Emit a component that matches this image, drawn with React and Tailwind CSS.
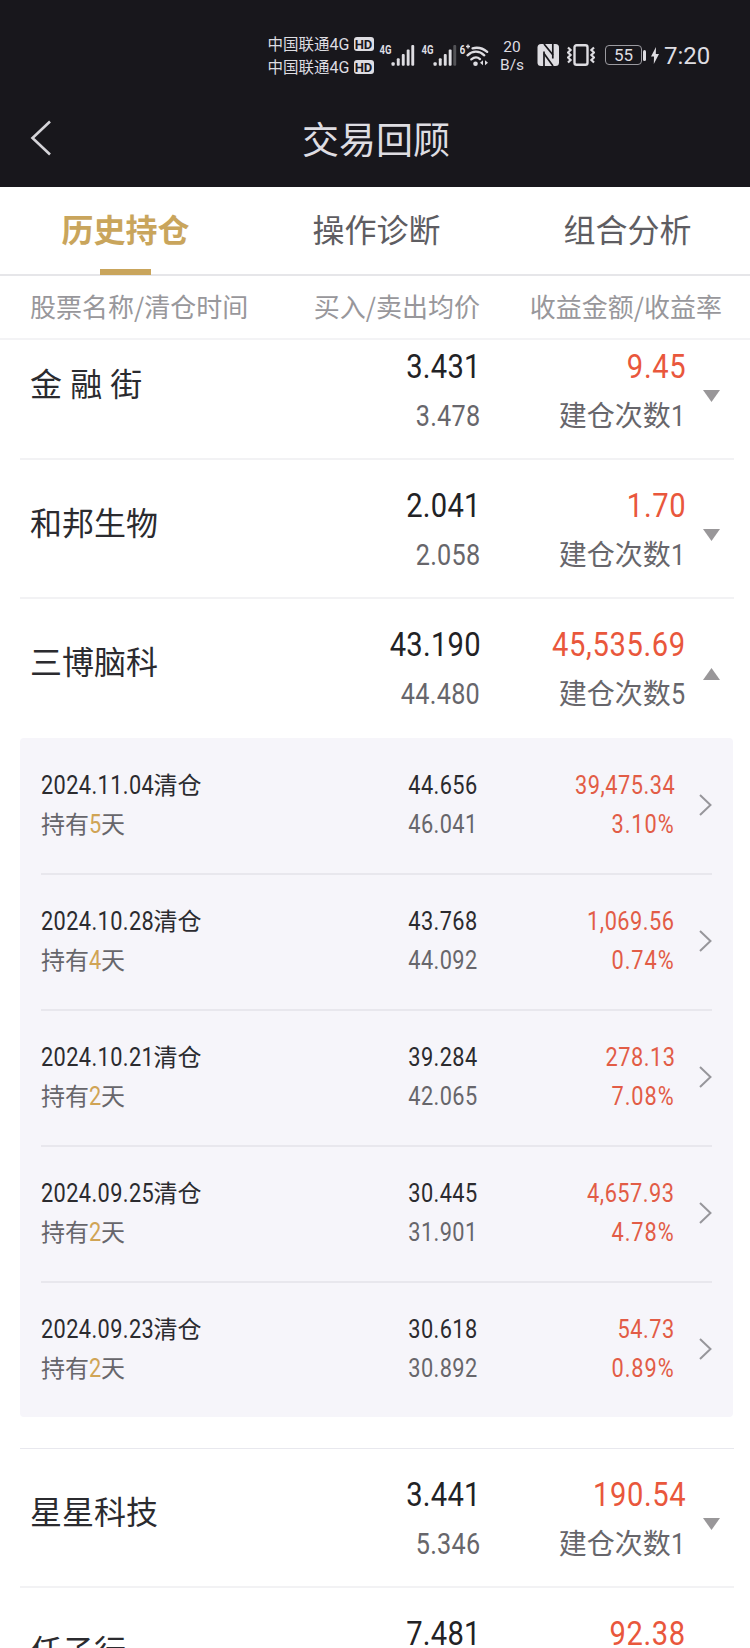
import React from "react";

const SANS = "font-['Noto_Sans_CJK_SC',sans-serif]";

const positions = [
  { name: "金 融 街", buy: "3.431", sell: "3.478", profit: "9.45", times: "1" },
  { name: "和邦生物", buy: "2.041", sell: "2.058", profit: "1.70", times: "1" },
  {
    name: "三博脑科",
    buy: "43.190",
    sell: "44.480",
    profit: "45,535.69",
    times: "5",
    records: [
      { date: "2024.11.04", days: "5", buy: "44.656", sell: "46.041", profit: "39,475.34", rate: "3.10%" },
      { date: "2024.10.28", days: "4", buy: "43.768", sell: "44.092", profit: "1,069.56", rate: "0.74%" },
      { date: "2024.10.21", days: "2", buy: "39.284", sell: "42.065", profit: "278.13", rate: "7.08%" },
      { date: "2024.09.25", days: "2", buy: "30.445", sell: "31.901", profit: "4,657.93", rate: "4.78%" },
      { date: "2024.09.23", days: "2", buy: "30.618", sell: "30.892", profit: "54.73", rate: "0.89%" },
    ],
  },
  { name: "星星科技", buy: "3.441", sell: "5.346", profit: "190.54", times: "1" },
  { name: "任子行", buy: "7.481", profit: "92.38" },
];

// Narrow numerals, anchored to the right edge of their column.
function Num({ children, className = "" }) {
  return (
    <span className={`inline-block origin-right scale-x-[0.87] whitespace-nowrap font-[Roboto,sans-serif] font-[440] ${className}`}>
      {children}
    </span>
  );
}

function Carrier() {
  return (
    <div className="flex h-[23px] items-center gap-[3px]">
      <span className="w-[83px] whitespace-nowrap text-[15.5px] leading-[23px]">
        中国联通<span className="font-[Roboto,sans-serif] text-[16px]">4G</span>
      </span>
      <span className="mt-px flex h-[14px] w-5 items-center justify-center rounded-[3px] bg-[#dedde2] font-[Roboto,sans-serif] text-[13px] font-bold leading-none text-[#18171c]">
        HD
      </span>
    </div>
  );
}

function Signal({ weak }) {
  return (
    <svg className="h-[30px] w-[42px] shrink-0" viewBox="0 0 42 30" fill="#dedde2">
      <text x="1.5" y="14" fontFamily="Roboto, sans-serif" fontSize="12.5" fontWeight="700" textLength="12" lengthAdjust="spacingAndGlyphs">
        4G
      </text>
      <rect x="13.5" y="22.3" width="3.2" height="3.5" rx="1" />
      <rect x="18.8" y="18.3" width="2.9" height="7.5" rx="1" />
      <rect x="23.8" y="14" width="2.9" height="11.8" rx="1" />
      <rect x="28.7" y="9.5" width="2.9" height="16.3" rx="1" />
      <rect x="33.3" y="5" width="2.9" height="20.8" rx="1" opacity={weak ? 0.3 : 1} />
    </svg>
  );
}

function Wifi() {
  return (
    <svg className="h-[30px] w-[31px] shrink-0" viewBox="0 0 31 30" fill="none" stroke="#dedde2" strokeWidth="2.3" strokeLinecap="round">
      <text x="-0.5" y="14" fontFamily="Roboto, sans-serif" fontSize="12.5" fontWeight="700" fill="#dedde2" stroke="none" textLength="5.8" lengthAdjust="spacingAndGlyphs">
        6
      </text>
      <path d="M6 6.5h4M8 4.5v4" strokeWidth="1.4" strokeLinecap="butt" />
      <path d="M12.5 8.3c5-1.3 10.5 0 14.7 3.6" />
      <path d="M7.5 15.3c5-4.8 11.8-4.8 16.8 0" />
      <path d="M11.3 19.4c3-2.5 6.2-2.5 8.7-0.3" />
      <circle cx="15.5" cy="23.7" r="2.3" fill="#dedde2" stroke="none" />
      <path d="M23 20.3v5l-3-2.5zM25 20.3v5l3-2.5z" fill="#dedde2" stroke="none" />
    </svg>
  );
}

function Nfc() {
  return (
    <svg className="h-[22px] w-[23px] shrink-0" viewBox="0 0 23 22">
      <rect x="0.5" y="0" width="21.5" height="22" rx="3.5" fill="#dedde2" />
      <path d="M7 22V7.5M7 0l9 11" fill="none" stroke="#18171c" strokeWidth="1.7" />
      <path d="M15.8 0v14.5M7 9.5l9 12.5" fill="none" stroke="#18171c" strokeWidth="1.7" />
    </svg>
  );
}

function Vibrate() {
  return (
    <svg className="h-[22px] w-[28px] shrink-0" viewBox="0 0 28 22" fill="none" stroke="#dedde2">
      <rect x="7.5" y="1.3" width="13" height="19.4" rx="2" strokeWidth="2.4" />
      <path d="M1 3.5l2.6 2.5L1 8.5l2.6 2.5L1 13.5 3.6 16 1 18.5" strokeWidth="2.2" />
      <path d="M27 3.5l-2.6 2.5 2.6 2.5-2.6 2.5 2.6 2.5-2.6 2.5 2.6 2.5" strokeWidth="2.2" />
    </svg>
  );
}

function StatusBar() {
  return (
    <div className="flex h-[108px] items-start pl-[267.5px] pt-[32px] text-[#dedde2]">
      <div className="flex w-[110.5px] flex-col">
        <Carrier />
        <Carrier />
      </div>
      <div className="flex pt-[8px]">
        <Signal />
        <Signal weak />
        <div className="-ml-[2px]">
          <Wifi />
        </div>
      </div>
      <div className="ml-[8px] mt-[6px] flex w-[26px] flex-col items-center font-[Roboto,sans-serif] text-[15.5px] leading-[18px]">
        <span>20</span>
        <span>B/s</span>
      </div>
      <div className="ml-[12px] mt-[12px] flex items-center">
        <Nfc />
        <div className="ml-[7px]">
          <Vibrate />
        </div>
        <div className="ml-[10px] flex items-center">
          <span className="flex h-5 w-[37px] items-center justify-center rounded-[4px] border-[1.5px] border-[#9b9aa0] font-[Roboto,sans-serif] text-[17px] leading-none">
            55
          </span>
          <span className="ml-px h-[11px] w-[3px] rounded-sm bg-[#dedde2]" />
        </div>
        <svg className="ml-[5px] h-[17px] w-[8px]" viewBox="0 0 8 17" fill="#dedde2">
          <path d="M5 0L0 9.5h3L2.8 17 8 7H4.8z" />
        </svg>
      </div>
      <span className="ml-[5px] mt-[12px] whitespace-nowrap font-[Roboto,sans-serif] text-[24px] leading-[24px]">7:20</span>
    </div>
  );
}

function Triangle({ up }) {
  return (
    <svg className="h-3 w-[17px]" viewBox="0 0 17 12" fill="#999799">
      <path d={up ? "M0 12L8.5 0 17 12z" : "M0 0h17L8.5 12z"} />
    </svg>
  );
}

function RecordRow({ record, last }) {
  return (
    <div className={`mx-[21px] flex h-[136px] pt-[27px] ${last ? "" : "border-b-2 border-[#e8e7ed]"}`}>
      <div className="flex w-[260px] flex-col text-[24px]">
        <span className="flex h-[39px] items-center text-[#2b2b2f]">
          <Num className="-mr-[17.5px] origin-left! text-[25px] leading-[39px] tracking-[0.018em]">{record.date}</Num>
          <span className="-mt-[3px]">清仓</span>
        </span>
        <span className="flex h-[39px] items-center text-[#67666b]">
          <span className="-mt-[3px]">持有</span>
          <Num className="-mr-[2px] origin-left! text-[25px] leading-[39px] text-[#d0a455]">{record.days}</Num>
          <span className="-mt-[3px]">天</span>
        </span>
      </div>
      <div className="flex w-[177.5px] flex-col items-end text-[25px] leading-[39px] tracking-[0.018em]">
        <Num className="text-[#2b2b2f]">{record.buy}</Num>
        <Num className="text-[#67666b]">{record.sell}</Num>
      </div>
      <div className="flex w-[198px] flex-col items-end text-[25px] leading-[39px] text-[#e25c46]">
        <Num className="tracking-[0.024em]">{record.profit}</Num>
        <Num className="tracking-[0.045em]">{record.rate}</Num>
      </div>
      <svg className="ml-[24px] mt-[28px] h-[22px] w-[13px]" viewBox="0 0 13 22" fill="none" stroke="#97969b" strokeWidth="2">
        <path d="M1 1l10.5 10L1 21" />
      </svg>
    </div>
  );
}

function PositionRow({ item }) {
  const open = Boolean(item.records);
  return (
    <>
      <div className={`ml-[20px] mr-[16px] flex h-[139px] pl-[10px] ${open ? "" : "border-b-2 border-[#f2f2f4]"}`}>
        <span className="w-[230px] whitespace-nowrap pt-[37px] text-[32px] leading-[48px] text-[#2b2b2f] [word-spacing:1px]">{item.name}</span>
        <div className="flex w-[220.5px] flex-col items-end pt-[22px] tracking-[0.02em]">
          <Num className="text-[33.5px] leading-[48px] text-[#222225]">{item.buy}</Num>
          {item.sell && <Num className="text-[29px] leading-[50px] text-[#67666b]">{item.sell}</Num>}
        </div>
        <div className="flex w-[204.5px] flex-col items-end pt-[22px]">
          <Num className="-mr-px text-[33.5px] leading-[48px] tracking-[0.022em] text-[#e9573c]">{item.profit}</Num>
          {item.times && (
            <span className="flex h-[50px] items-center text-[28px] text-[#67666b]">
              <span className="-mt-[4px]">建仓次数</span>
              <Num className="-ml-[2px] text-[29px] leading-[50px]">{item.times}</Num>
            </span>
          )}
        </div>
        <div className="ml-[18px] pt-[69px]">
          <Triangle up={open} />
        </div>
      </div>
      {open && (
        <>
          <div className="ml-[20px] mr-[17px] h-[679px] rounded-[4px] bg-[#f6f5fa] pt-px">
            {item.records.map((r, i) => (
              <RecordRow key={r.date} record={r} last={i === item.records.length - 1} />
            ))}
          </div>
          <div className="ml-[20px] mr-[16px] h-[32px] border-b border-[#e8e8ee]" />
        </>
      )}
    </>
  );
}

export default function App() {
  return (
    <div className={`flex h-[1648px] w-[750px] flex-col overflow-hidden bg-white ${SANS}`}>
      <header className="h-[187px] shrink-0 bg-[#18171c]">
        <StatusBar />
        <div className="flex h-[60px] items-center text-[#dedde2]">
          <svg className="ml-[30px] h-[36px] w-[22px]" viewBox="0 0 22 36" fill="none" stroke="#d5d4d9" strokeWidth="2.6">
            <path d="M20 1.5L2.5 18 20 34.5" />
          </svg>
          <h1 className="w-[648px] text-center text-[37px] leading-[60px]">交易回顾</h1>
        </div>
      </header>

      <nav className="grid h-[89px] shrink-0 grid-cols-3 border-b-2 border-[#e6e6e9] text-center text-[32px] leading-[82px] text-[#5e5d62]">
        <div className="flex flex-col items-center font-bold text-[#c9a55c]">
          <span className="h-[82px] pl-px">历史持仓</span>
          <span className="h-[6px] w-[51px] shrink-0 bg-[#c9a55c]" />
        </div>
        <span className="pl-[3px]">操作诊断</span>
        <span className="pl-[5px]">组合分析</span>
      </nav>

      <div className="flex h-[64px] shrink-0 border-b-2 border-[#f3f3f5] pl-[30px] text-[26px] leading-[60px] text-[#98979b]">
        <span className="w-[230px]">股票名称/清仓时间</span>
        <span className="w-[220px] text-right">买入/卖出均价</span>
        <span className="w-[242px] text-right">收益金额/收益率</span>
      </div>

      <main className="min-h-0 flex-1 overflow-hidden">
        <div className="-mt-[19px]">
          {positions.map((item) => (
            <PositionRow key={item.name} item={item} />
          ))}
        </div>
      </main>
    </div>
  );
}
